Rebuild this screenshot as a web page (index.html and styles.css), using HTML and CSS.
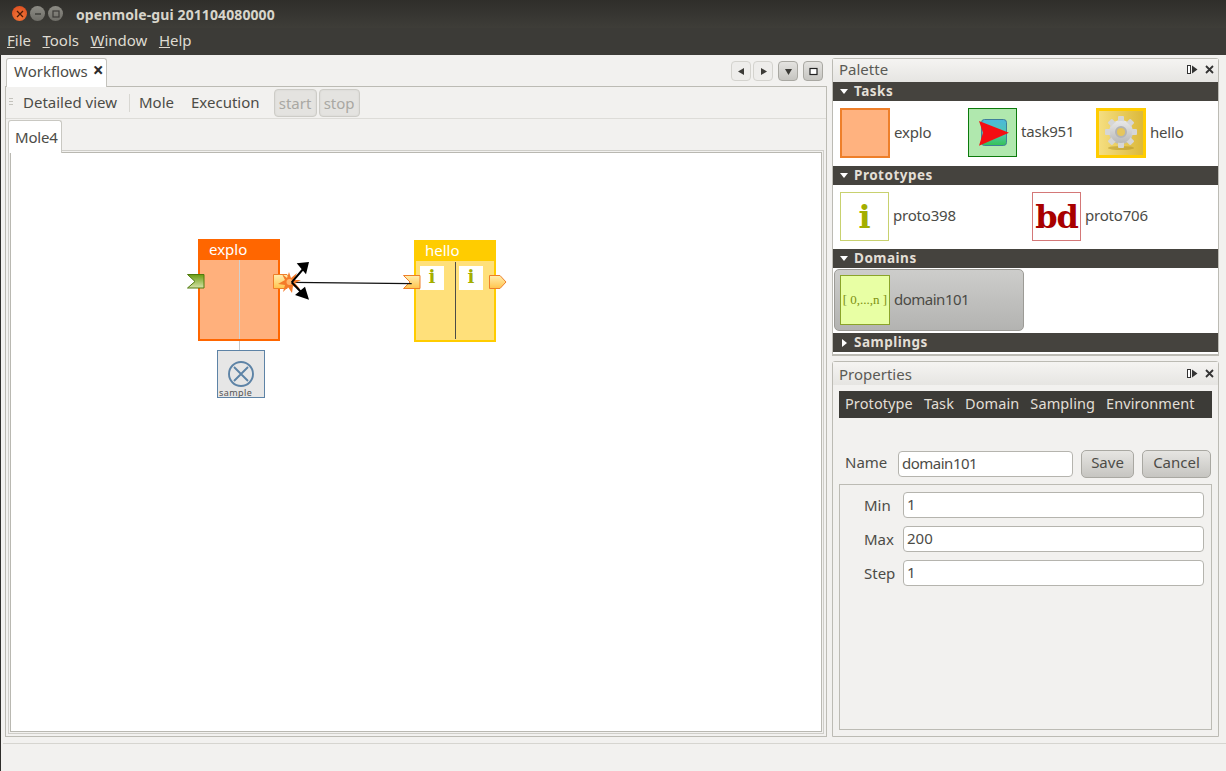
FILE: index.html
```html
<!DOCTYPE html>
<html lang="en">
<head>
<meta charset="utf-8">
<title>openmole-gui</title>
<link rel="stylesheet" href="styles.css">
</head>
<body>
<div class="window">
  <header class="titlebar">
    <div class="winbtns">
      <span class="wb close"><svg width="8" height="8" viewBox="0 0 8 8"><path d="M1 1L7 7M7 1L1 7" stroke="#4a1a08" stroke-width="1.3"/></svg></span>
      <span class="wb"><svg width="8" height="8" viewBox="0 0 8 8"><path d="M1 4H7" stroke="#3c3b37" stroke-width="1.4"/></svg></span>
      <span class="wb"><svg width="8" height="8" viewBox="0 0 8 8"><rect x="1" y="1" width="6" height="6" fill="none" stroke="#3c3b37" stroke-width="1.2"/></svg></span>
    </div>
    <span class="wintitle">openmole-gui 201104080000</span>
  </header>
  <nav class="menubar">
    <span><u>F</u>ile</span><span><u>T</u>ools</span><span><u>W</u>indow</span><span><u>H</u>elp</span>
  </nav>
  <main class="main">
    <section class="left">
      <div class="tabrow">
        <div class="tab">Workflows<b class="tabx">×</b></div>
        <div class="tabctl">
          <span class="cb flat"><svg width="9" height="9" viewBox="0 0 9 9"><path d="M7 1V8L1 4.500Z" fill="#3c3b37"/></svg></span>
          <span class="cb flat"><svg width="9" height="9" viewBox="0 0 9 9"><path d="M2 1V8L8 4.500Z" fill="#3c3b37"/></svg></span>
          <span class="cb raised gapl"><svg width="9" height="9" viewBox="0 0 9 9"><path d="M1 2H8L4.500 8Z" fill="#3c3b37"/></svg></span>
          <span class="cb raised gapl"><svg width="9" height="9" viewBox="0 0 9 9"><rect x="1" y="1.500" width="7" height="6" fill="#fff" stroke="#222" stroke-width="1.200"/></svg></span>
        </div>
      </div>
      <div class="tabpanel">
        <div class="toolbar">
          <span class="grip"></span>
          <span class="tool">Detailed view</span>
          <span class="sep"></span>
          <span class="tool">Mole</span>
          <span class="tool">Execution</span>
          <div class="toolbtns"><span class="disbtn w1">start</span><span class="disbtn w2">stop</span></div>
        </div>
        <div class="subtabs"><div class="subtab">Mole4</div></div>
        <div class="canvas">
          <svg class="wires" width="811" height="578" viewBox="0 0 811 578">
            <defs>
              <linearGradient id="gy" x1="0" y1="0" x2="0" y2="1"><stop offset="0" stop-color="#ffeeb0"/><stop offset="1" stop-color="#ffc44d"/></linearGradient>
              <linearGradient id="gg" x1="0" y1="0" x2="0" y2="1"><stop offset="0" stop-color="#6b9c10"/><stop offset="1" stop-color="#d5e2a8"/></linearGradient>
            </defs>
            <path d="M228.500 186V197" stroke="#c8c8c8" stroke-width="1"/>
          </svg>
          <div class="node explo">
            <div class="nhead">explo</div>
            <div class="nbody"><span class="ndiv light"></span></div>
          </div>
          <div class="node hello">
            <div class="nhead">hello</div>
            <div class="nbody">
              <span class="itile">i</span><span class="itile">i</span>
              <span class="ndiv dark"></span>
            </div>
          </div>
          <div class="samplebox">
            <svg width="28" height="28" viewBox="0 0 28 28"><circle cx="14" cy="14" r="12" fill="none" stroke="#5d83a6" stroke-width="1.900"/><path d="M7 7L21 21M21 7L7 21" stroke="#5d83a6" stroke-width="1.900"/></svg>
            <span class="samplelbl">sample</span>
          </div>
          <svg class="overlay" width="811" height="578" viewBox="0 0 811 578">
            <path d="M176.500 121.500H193V135H176.500L184 128.500Z" fill="url(#gg)" stroke="#4f7a0c"/>
            <path d="M262.500 121.500H276L282 128.500L276 135.500H262.500Z" fill="url(#gy)" stroke="#ee7f2a"/>
            <path d="M392.500 122.500H409V135.500H392.500L399 129Z" fill="url(#gy)" stroke="#ee7f2a"/>
            <path d="M478.500 122.500H489L495 129L489 135.500H478.500Z" fill="url(#gy)" stroke="#ee7f2a"/>
            <path d="M280.700 129.300L400.700 130.700" stroke="#111" stroke-width="1.200"/>
            <path d="M278 119L280 125L286 120L283 127L290 127L284 130L289 136L282 133L281 140L277 134L272 139L274 132L267 131L274 127L271 121L276 125Z" fill="#f47b2a"/>
            <circle cx="278.500" cy="129" r="3" fill="#ffb46a"/>
            <path d="M280.700 129.300L293 115M280.700 129.300L291 140" stroke="#000" stroke-width="2"/>
            <path d="M298 109L285.700 110.300L295 121.300ZM298 146.700L284 142L294 133.700Z" fill="#000"/>
          </svg>
        </div>
      </div>
    </section>
    <aside class="right">
      <section class="dock palette">
        <div class="dockhead"><span>Palette</span><span class="dockicons"><svg width="11" height="9" viewBox="0 0 11 9"><rect x="0.500" y="0.500" width="3" height="8" fill="#fff" stroke="#333"/><path d="M5 0.500V8.500L10.500 4.500Z" fill="#333"/></svg><svg width="9" height="9" viewBox="0 0 9 9"><path d="M1 1L8 8M8 1L1 8" stroke="#333" stroke-width="1.800"/></svg></span></div>
        <div class="cat"><i class="tri down"></i>Tasks</div>
        <div class="items tasks">
          <div class="item"><span class="ic ic-explo"></span><span class="lbl">explo</span></div>
          <div class="item"><span class="ic ic-task"><svg width="47" height="47" viewBox="0 0 47 47"><defs><linearGradient id="gt" x1="0" y1="0" x2="0" y2="1"><stop offset="0" stop-color="#4bb8dc"/><stop offset=".55" stop-color="#4fc8b0"/><stop offset="1" stop-color="#35c254"/></linearGradient></defs><rect x="12.500" y="10.500" width="25" height="26" rx="3" fill="url(#gt)" stroke="#3f7f9a"/><path d="M10 12L40 23.700L10 36.700L14 23.700Z" fill="#f50d12"/></svg></span><span class="lbl">task951</span></div>
          <div class="item"><span class="ic ic-hello"><svg width="40" height="40" viewBox="0 0 40 40"><defs><linearGradient id="gear" x1="0" y1="0" x2="0" y2="1"><stop offset="0" stop-color="#e8e8e8"/><stop offset="1" stop-color="#b8b8b8"/></linearGradient></defs><ellipse cx="20" cy="35" rx="13" ry="2" fill="#a88a20" opacity=".45"/><g fill="url(#gear)"><circle cx="20" cy="19" r="12"/></g><g fill="#d6d6d6"><rect x="17" y="3" width="6" height="32" rx="1"/><rect x="17" y="3" width="6" height="32" rx="1" transform="rotate(45 20 19)"/><rect x="17" y="3" width="6" height="32" rx="1" transform="rotate(90 20 19)"/><rect x="17" y="3" width="6" height="32" rx="1" transform="rotate(135 20 19)"/></g><circle cx="20" cy="19" r="11" fill="url(#gear)"/><circle cx="20" cy="19" r="5" fill="#e6c65c" stroke="#b4b4b4" stroke-width="2"/></svg></span><span class="lbl">hello</span></div>
        </div>
        <div class="cat"><i class="tri down"></i>Prototypes</div>
        <div class="items protos">
          <div class="item"><span class="ic ic-i">i</span><span class="lbl">proto398</span></div>
          <div class="item"><span class="ic ic-bd">bd</span><span class="lbl">proto706</span></div>
        </div>
        <div class="cat"><i class="tri down"></i>Domains</div>
        <div class="items domains">
          <div class="item selected"><span class="ic ic-dom">[ 0,...,n ]</span><span class="lbl">domain101</span></div>
        </div>
        <div class="cat"><i class="tri side"></i>Samplings</div>
      </section>
      <section class="dock props">
        <div class="dockhead"><span>Properties</span><span class="dockicons"><svg width="11" height="9" viewBox="0 0 11 9"><rect x="0.500" y="0.500" width="3" height="8" fill="#fff" stroke="#333"/><path d="M5 0.500V8.500L10.500 4.500Z" fill="#333"/></svg><svg width="9" height="9" viewBox="0 0 9 9"><path d="M1 1L8 8M8 1L1 8" stroke="#333" stroke-width="1.800"/></svg></span></div>
        <div class="propbar"><span>Prototype</span><span>Task</span><span>Domain</span><span>Sampling</span><span>Environment</span></div>
        <div class="namerow">
          <label class="namelbl">Name</label>
          <div class="field namefield">domain101</div>
          <span class="btn save">Save</span>
          <span class="btn cancel">Cancel</span>
        </div>
        <div class="fields">
          <div class="frow"><label>Min</label><div class="field">1</div></div>
          <div class="frow"><label>Max</label><div class="field">200</div></div>
          <div class="frow"><label>Step</label><div class="field">1</div></div>
        </div>
      </section>
    </aside>
  </main>
  <footer class="statusbar"></footer>
</div>
</body>
</html>
```
FILE: styles.css
```css
* { box-sizing: border-box; }
html, body { margin: 0; padding: 0; }
body {
  width: 1226px; height: 771px; overflow: hidden;
  font-family: "Noto Sans", "Open Sans", sans-serif;
  font-size: 15px; color: #4c4c47; background: #f2f1ef;
}
.window { width: 1226px; height: 771px; display: flex; flex-direction: column; border-left: 1px solid #2e2d2a; }

.titlebar {
  height: 28px; display: flex; align-items: center; gap: 12px; padding: 0 0 0 12px;
  background: linear-gradient(#2f2e2a, #3e3d38); flex: none; margin-left: -1px;
}
.winbtns { display: flex; gap: 3px; height: 18px; width: 52px; border-radius: 9px; }
.wb { width: 15px; height: 15px; margin-top: 1px; flex: none; border-radius: 50%; background: linear-gradient(#8d8c85, #6e6d67); display: flex; align-items: center; justify-content: center; }
.wb.close { background: radial-gradient(circle at 50% 70%, #f47a3a, #d9471c); }
.wintitle { color: #d8d5cb; font-weight: 700; font-size: 14px; letter-spacing: .1px; }

.menubar {
  height: 27px; flex: none; background: #3c3b37; display: flex; gap: 11.500px; align-items: center;
  padding: 0 0 4px 7px; color: #dfdbd2; font-size: 15px; margin-left: -1px;
}

.main { height: 688px; flex: none; display: flex; padding: 3px 6px 0 4px; gap: 5px; }

.left { width: 822px; display: flex; flex-direction: column; }
.tabrow { height: 28px; flex: none; display: flex; justify-content: space-between; padding-left: 1px; position: relative; z-index: 1; }
.tab {
  width: 101px; height: 29px; background: #fff; border: 1px solid #c4c3bd; border-bottom: 0;
  border-radius: 3px 3px 0 0; padding: 1px 0 0 7px; white-space: nowrap;
}
.tabx { color: #2c2c2c; font-size: 19px; line-height: 20px; margin-left: 5px; }
.tabctl { display: flex; gap: 2px; padding: 3px 4px 0 0; }
.cb { width: 20px; height: 20px; border-radius: 4px; display: flex; align-items: center; justify-content: center; border: 1px solid #d4d3ce; background: #eeedeb; }
.cb.raised { border-color: #a9a8a2; background: linear-gradient(#e4e3e0, #c6c5c1); }
.cb.gapl { margin-left: 3px; }

.tabpanel { height: 651px; flex: none; border: 1px solid #bcbbb4; display: flex; flex-direction: column; background: #f2f1ef; }
.toolbar { height: 32px; flex: none; display: flex; align-items: center; border-bottom: 1px solid #dddcd8; padding-left: 3px; }
.grip { width: 4px; height: 9px; margin-right: 10px; background: repeating-linear-gradient(#c4c3bd 0 1px, transparent 1px 3px); }
.tool { white-space: nowrap; margin-bottom: 2px; }
.sep { width: 1px; height: 18px; background: #d8d7d2; margin: 0 9px 0 12px; }
.tool + .tool { margin-left: 17px; }
.toolbtns { display: flex; gap: 2px; margin-left: 14px; }
.disbtn {
  height: 28px; border: 1px solid #cdccc7; border-radius: 4px; background: #e4e3e0; color: #a9a8a3;
  display: flex; align-items: center; justify-content: center; box-shadow: inset 0 0 2px #d2d1cd;
}
.w1 { width: 43px; } .w2 { width: 41px; }

.subtabs { height: 33px; flex: none; padding: 1px 0 0 2px; position: relative; z-index: 1; }
.subtab { width: 54px; height: 33px; background: #fff; border: 1px solid #c9c8c2; border-bottom: 0; border-radius: 3px 3px 0 0; padding: 6px 0 0 6px; letter-spacing: -.2px; }

.canvas {
  position: relative; width: 812px; height: 580px; margin-left: 4px; background: #fff;
  border: 1px solid #b9b8b1; outline: 1px solid #cfcec9; outline-offset: 1px;
}
.wires, .overlay { position: absolute; left: 0; top: 0; }
.node { position: absolute; width: 82px; height: 102px; border: 2px solid; display: flex; flex-direction: column; }
.explo { left: 187px; top: 86px; border-color: #ff6600; background: #ffb07c; }
.hello { left: 403px; top: 87px; border-color: #ffcc00; background: #ffe07a; }
.nhead { height: 19px; flex: none; color: #fff; font-size: 15px; line-height: 17px; padding-left: 9px; }
.explo .nhead { background: #ff6600; }
.hello .nhead { background: #ffcc00; }
.nbody { position: relative; flex: 1; }
.ndiv { position: absolute; left: 39px; top: 0; bottom: 0; width: 1px; }
.ndiv.light { background: #cfcfcf; }
.ndiv.dark { background: #4c4c47; top: 1px; bottom: 1px; }
.itile {
  position: absolute; top: 5px; left: 4px; width: 24px; height: 24px; background: #fff;
  color: #a3ae00; font: 700 18px/22px "DejaVu Serif", serif; text-align: center;
}
.itile + .itile { left: 43px; }
.samplebox {
  position: absolute; left: 206px; top: 197px; width: 48px; height: 48px; background: #e6e6e6;
  border: 1px solid #5d83a6; padding: 9px 0 0 9px;
}
.samplebox svg { display: block; }
.samplelbl { position: absolute; left: 1px; bottom: -1px; font-size: 9px; line-height: 11px; color: #555; letter-spacing: .4px; }

.right { width: 387px; display: flex; flex-direction: column; gap: 5px; }
.dock { border: 1px solid #bcbbb4; border-radius: 3px 3px 0 0; background: #fff; }
.palette { height: 298px; flex: none; border-bottom-width: 2px; }
.dockhead {
  height: 23px; display: flex; justify-content: space-between; align-items: center; padding: 0 4px 0 6px;
  background: linear-gradient(#f5f4f2, #e6e5e2); color: #5a5a55;
}
.palette .dockhead { padding-bottom: 3px; }
.dockicons { display: flex; gap: 7px; align-items: center; }
.dockicons svg { display: block; }
.cat {
  height: 19px; background: #45433e; color: #e3dfd6; font-weight: 700; font-size: 13.500px; line-height: 17px;
  padding-left: 7px; display: flex; align-items: center; letter-spacing: .5px;
}
.tri { width: 0; height: 0; margin-right: 6px; border-style: solid; }
.tri.down { border-width: 5px 4px 0; border-color: #fff transparent transparent; }
.tri.side { border-width: 4px 0 4px 5px; border-color: transparent transparent transparent #fff; margin-left: 2px; margin-right: 7px; }
.items { height: 65px; display: grid; padding: 7px 0 0 7px; align-items: start; color: #4b4b46; letter-spacing: -.2px; }
.tasks { grid-template-columns: 128px 128px 128px; }
.protos { grid-template-columns: 192px 192px; height: 64px; }
.domains { padding: 1px 0 0 1px; height: 65px; letter-spacing: -.5px; }
.item { display: flex; align-items: center; gap: 4px; white-space: nowrap; }
.lbl { margin-bottom: 3px; }
.ic { width: 50px; height: 50px; flex: none; display: flex; align-items: center; justify-content: center; overflow: hidden; letter-spacing: 0; }
.ic-explo { background: #ffb27f; border: 2px solid #ee7f2a; }
.ic-task { background: #b0e8ae; border: 1px solid #0c7a0c; width: 49px; height: 49px; }
.ic-hello { border: 3px solid #ffcc00; background: linear-gradient(90deg, #f5de80, #dcb93a); }
.ic-i { width: 49px; height: 49px; border: 1px solid #c8d16f; color: #a3ae00; font: 700 32px/1 "DejaVu Serif", serif; }
.ic-bd { width: 49px; height: 49px; border: 1px solid #d47878; color: #a80000; font: 700 32px/1 "DejaVu Serif", serif; letter-spacing: -1px; }
.ic-dom { background: #e8ffa4; border: 1px solid #8aa32a; color: #7c8f10; font: 13px "Liberation Serif", serif; white-space: nowrap; }
.selected {
  width: 190px; height: 62px; padding-left: 5px; border: 1px solid #9c9b96; border-radius: 5px;
  background: linear-gradient(#cdcdcb, #b3b3b1);
}

.props { flex: none; background: #f2f1ef; height: 376px; display: flex; flex-direction: column; }
.propbar {
  margin: 6px 6px 0 6px; height: 27px; background: #3c3b37; color: #e3dfd6; display: flex; align-items: center;
  padding: 0 0 3px 6px; gap: 11px; white-space: nowrap; flex: none; font-size: 14.500px; letter-spacing: .1px;
}
.namerow { display: flex; align-items: center; height: 29px; margin-top: 31px; padding-left: 12px; flex: none; }
.namelbl { width: 53px; padding-bottom: 3px; }
.field {
  height: 26px; background: #fff; border: 1px solid #b5b4ae; border-radius: 4px; padding: 0 3px; line-height: 22px; color: #4c4c47;
}
.namefield { width: 175px; letter-spacing: -.5px; }
.btn {
  height: 28px; border: 1px solid #a9a8a2; border-radius: 5px; background: linear-gradient(#e6e5e2, #c6c5c1);
  display: flex; align-items: center; justify-content: center; padding-bottom: 3px;
}
.save { width: 53px; margin-left: 8px; }
.cancel { width: 69px; margin-left: 8px; }
.fields { margin: 6px 6px 6px 6px; flex: 1; border: 1px solid #bcbbb4; padding: 7px 7px 0 0; display: flex; flex-direction: column; gap: 8px; }
.frow { display: flex; align-items: center; }
.frow label { width: 63px; padding: 0 0 1px 24px; flex: none; }
.frow .field { flex: 1; }

.statusbar { flex: 1; border-top: 1px solid #d6d5d0; background: #f2f1ef; margin-left: 2px; }
```
